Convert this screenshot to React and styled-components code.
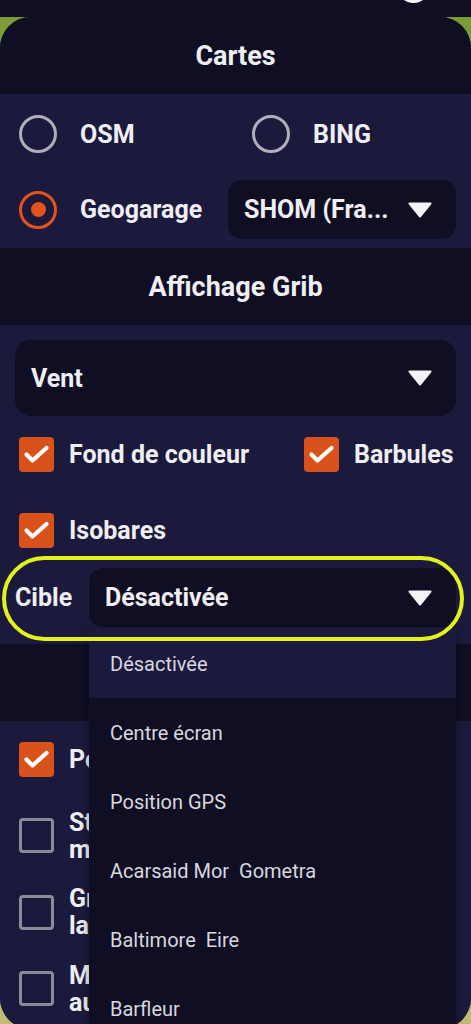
import React from "react";
import styled, { createGlobalStyle } from "styled-components";

const GlobalStyle = createGlobalStyle`
  html, body {
    margin: 0;
    padding: 0;
    background: #0f0e22;
  }
  body {
    font-family: Roboto, "Noto Sans", "Liberation Sans", sans-serif;
    -webkit-font-smoothing: antialiased;
  }
  * { box-sizing: border-box; }
`;

const Page = styled.div`
  width: 471px;
  height: 1024px;
  overflow: hidden;
  display: flex;
  flex-direction: column;
  background: #0f0e22;
`;

const TopBar = styled.div`
  height: 17px;
  flex: none;
  display: flex;
  justify-content: flex-end;
  align-items: flex-start;
  padding-right: 41px;
  background: #0f0e22;
`;

const TopIcon = styled.div`
  width: 33px;
  height: 33px;
  margin-top: -30px;
  border-radius: 50%;
  background: #f2f2f4;
`;

const MapArea = styled.div`
  flex: 1;
  background: linear-gradient(180deg, #7a9c36 0%, #9aa650 50%, #c2bb78 100%);
`;

const Panel = styled.div`
  height: 1012px;
  border-radius: 31px;
  overflow: hidden;
  background: #1c1a3c;
  display: flex;
  flex-direction: column;
`;

const SectionHeader = styled.div`
  height: 77px;
  flex: none;
  display: flex;
  align-items: center;
  justify-content: center;
  background: #0f0e22;
  color: #efeef3;
  font-size: 27px;
  font-weight: 700;
`;

const SectionBody = styled.div`
  background: #1c1a3c;
  padding: ${(p) => p.$pad || "0 15px"};
  display: flex;
  flex-direction: column;
  gap: ${(p) => p.$gap || "0px"};
`;

const TwoCols = styled.div`
  display: grid;
  grid-template-columns: ${(p) => p.$cols || "213px 1fr"};
  align-items: center;
  height: ${(p) => p.$h || "60px"};
`;

const Option = styled.label`
  display: flex;
  align-items: center;
  gap: ${(p) => p.$gap || "23px"};
  padding-left: ${(p) => p.$indent || "4px"};
  color: #efeef3;
  font-size: 25px;
  font-weight: 700;
  line-height: 27px;
`;

const Radio = styled.span`
  width: 38px;
  height: 38px;
  flex: none;
  border-radius: 50%;
  border: 3px solid ${(p) => (p.$checked ? "#e2541c" : "#b1aeba")};
  display: flex;
  align-items: center;
  justify-content: center;
  &::after {
    content: "";
    display: ${(p) => (p.$checked ? "block" : "none")};
    width: 15px;
    height: 15px;
    border-radius: 50%;
    background: #e2541c;
  }
`;

const Box = styled.span`
  width: 35px;
  height: 35px;
  flex: none;
  border-radius: 4px;
  background: ${(p) => (p.$checked ? "#d9511b" : "transparent")};
  border: ${(p) => (p.$checked ? "none" : "3px solid #8d8a97")};
  display: flex;
  align-items: center;
  justify-content: center;
`;

const SelectWrap = styled.div`
  position: relative;
`;

const SelectBox = styled.div`
  height: ${(p) => p.$h || "59px"};
  border-radius: ${(p) => (p.$h === "76px" ? "16px" : "14px")};
  background: #0f0e22;
  display: flex;
  align-items: center;
  justify-content: space-between;
  padding: 0 24px 0 16px;
  color: #efeef3;
  font-size: 25px;
  font-weight: 700;
  white-space: nowrap;
`;

const CibleRow = styled.div`
  position: relative;
  display: grid;
  grid-template-columns: 74px 1fr;
  align-items: center;
  height: 59px;
  &::after {
    content: "";
    position: absolute;
    top: -12px;
    bottom: -14px;
    left: -13px;
    right: -8px;
    border: 4.5px solid #e3f31b;
    border-radius: 44px;
    pointer-events: none;
    z-index: 3;
  }
`;

const FieldLabel = styled.span`
  color: #efeef3;
  font-size: 25px;
  font-weight: 700;
`;

const Menu = styled.ul`
  position: absolute;
  top: calc(100% + 2px);
  left: 0;
  right: 0;
  margin: 0;
  padding: 0;
  list-style: none;
  background: #0f0e22;
  box-shadow: 0 4px 10px rgba(0, 0, 0, 0.35);
  z-index: 2;
`;

const MenuItem = styled.li`
  height: 69px;
  display: flex;
  align-items: center;
  padding-left: 21px;
  font-size: 20px;
  font-weight: 400;
  color: #d9d7df;
  white-space: pre;
  background: ${(p) => (p.$active ? "#1c1a3c" : "transparent")};
`;

const CheckRow = styled.div`
  height: ${(p) => p.$h || "76px"};
  display: grid;
  grid-template-columns: ${(p) => p.$cols || "1fr"};
  align-items: center;
`;

const Wrapped = styled.span`
  max-width: 220px;
`;

const Arrow = () => (
  <svg width="24" height="16" viewBox="0 0 24 16">
    <path d="M1.5 1.5 H22.5 L12 14.5 Z" fill="#f4f4f7" stroke="#f4f4f7" strokeWidth="2" strokeLinejoin="round" />
  </svg>
);

const CheckMark = () => (
  <svg width="35" height="35" viewBox="0 0 35 35">
    <path d="M7.5 17.5 L13.5 23.5 L27.5 11" fill="none" stroke="#fff" strokeWidth="4.2" strokeLinecap="round" strokeLinejoin="round" />
  </svg>
);

const Checkbox = ({ checked, children, narrow }) => (
  <Option $gap="15px">
    <Box $checked={checked}>{checked && <CheckMark />}</Box>
    {narrow ? <Wrapped>{children}</Wrapped> : <span>{children}</span>}
  </Option>
);

const cibles = [
  "Désactivée",
  "Centre écran",
  "Position GPS",
  "Acarsaid Mor  Gometra",
  "Baltimore  Eire",
  "Barfleur",
  "Bayonne",
];

export default function App() {
  return (
    <>
      <GlobalStyle />
      <Page>
        <TopBar>
          <TopIcon />
        </TopBar>
        <MapArea>
          <Panel>
            <SectionHeader>Cartes</SectionHeader>
            <SectionBody $pad="10px 15px 9px" $gap="16px">
              <TwoCols>
                <Option>
                  <Radio />
                  OSM
                </Option>
                <Option $indent="24px">
                  <Radio />
                  BING
                </Option>
              </TwoCols>
              <TwoCols $h="59px">
                <Option>
                  <Radio $checked />
                  Geogarage
                </Option>
                <SelectBox>
                  SHOM (Fra...
                  <Arrow />
                </SelectBox>
              </TwoCols>
            </SectionBody>

            <SectionHeader>Affichage Grib</SectionHeader>
            <SectionBody $pad="15px 15px 17px">
              <SelectBox $h="76px">
                Vent
                <Arrow />
              </SelectBox>
              <CheckRow $cols="285px 1fr">
                <Checkbox checked>Fond de couleur</Checkbox>
                <Checkbox checked>Barbules</Checkbox>
              </CheckRow>
              <CheckRow>
                <Checkbox checked>Isobares</Checkbox>
              </CheckRow>
              <CibleRow>
                <FieldLabel>Cible</FieldLabel>
                <SelectWrap>
                  <SelectBox>
                    Désactivée
                    <Arrow />
                  </SelectBox>
                  <Menu>
                    {cibles.map((c, i) => (
                      <MenuItem key={c} $active={i === 0}>
                        {c}
                      </MenuItem>
                    ))}
                  </Menu>
                </SelectWrap>
              </CibleRow>
            </SectionBody>

            <SectionHeader>Affichage bateau</SectionHeader>
            <SectionBody>
              <CheckRow $h="76.5px">
                <Checkbox checked>Polaires</Checkbox>
              </CheckRow>
              <CheckRow $h="76.5px">
                <Checkbox narrow>Stations météo maritimes</Checkbox>
              </CheckRow>
              <CheckRow $h="76.5px">
                <Checkbox narrow>Grille de latitude/longitude</Checkbox>
              </CheckRow>
              <CheckRow $h="76.5px">
                <Checkbox narrow>Masquer automatiquement</Checkbox>
              </CheckRow>
            </SectionBody>
          </Panel>
        </MapArea>
      </Page>
    </>
  );
}
